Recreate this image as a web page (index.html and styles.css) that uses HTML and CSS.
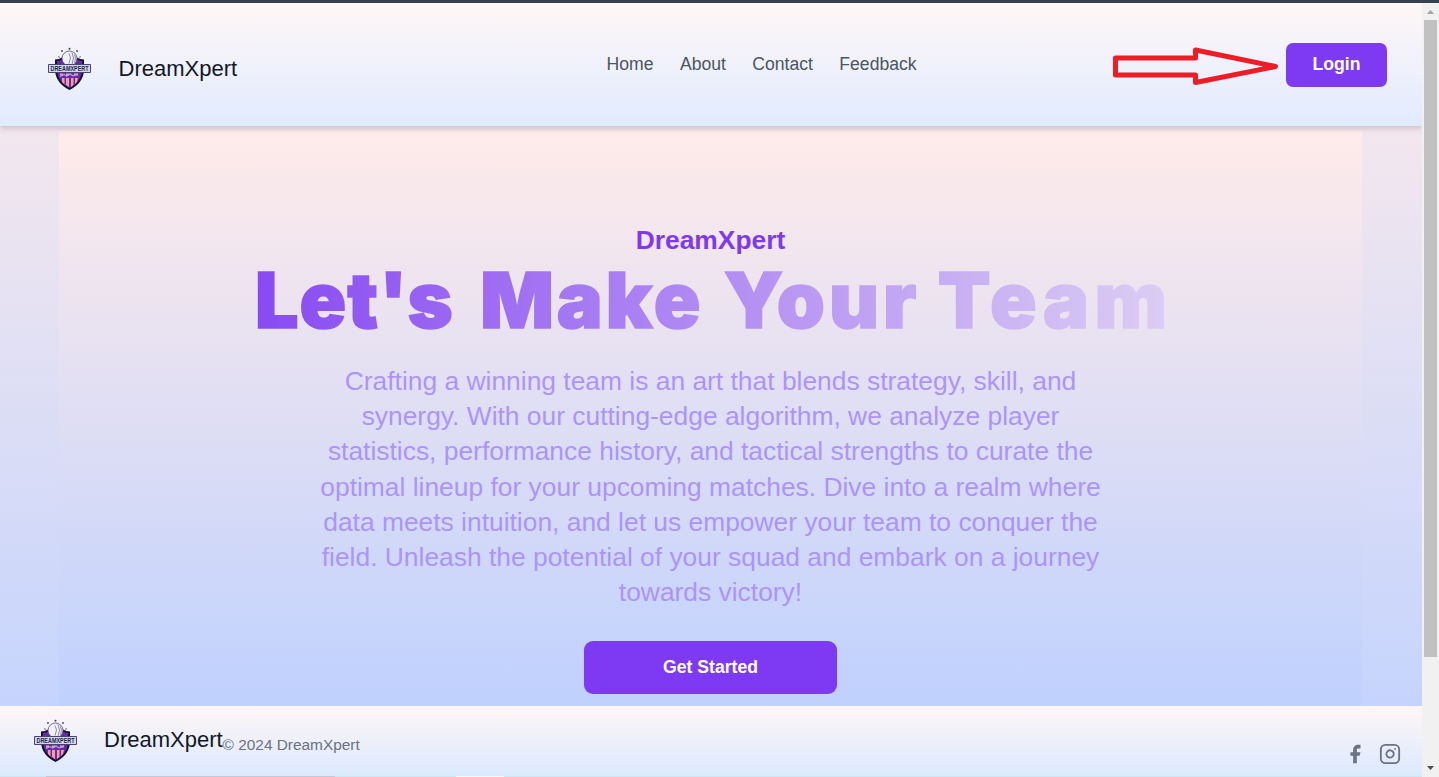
FILE: index.html
```
<!DOCTYPE html>
<html lang="en">
<head>
<meta charset="utf-8">
<title>DreamXpert</title>
<link rel="stylesheet" href="styles.css">
</head>
<body>
<div class="window-edge"></div>
<div class="viewport">
  <div class="page">
    <header class="header">
      <div class="brand">
        <svg class="crest" viewBox="0 0 44 44">
          <g id="shield">
            <g fill="#413b72"><circle cx="21.5" cy="1.7" r="1"/><circle cx="14" cy="4" r=".9"/><circle cx="29" cy="4" r=".9"/><path d="M10 9l2 1-1 1zM33 9l-2 1 1 1z"/></g>
            <path d="M7 12.500q4 0 7-2h15q3 2 7 2v11q-1 13-14.500 19.500Q8 36.500 7 23.500z" fill="#17122f"/>
            <path d="M9 14q4-.5 7-2h11q3 1.500 7 2v10q-1 11-12.500 17Q10 35 9 24z" fill="#652bad"/>
            <path d="M14 31h2.500v6.500L14 35zm4 0h3v9l-3-2zm5 0h2.500v7L23 40zm4 0h3l-1 4-2 2zM12 26.500h3v2h-3zm6 0h3v2h-3zm8 0h4v2h-4z" fill="#f69b9f"/>
            <path d="M12 29.500l4-2 3 1.500 3-2 3 2 5-2" fill="none" stroke="#c1a8e8" stroke-width="1.100"/>
            <circle cx="21.500" cy="11.500" r="7.500" fill="#f0f0f8" stroke="#554e78" stroke-width=".8"/>
            <path d="M21 6.500q3 4 0 10m3-11q3 5 0 12m2.500-10q2 4 0 8" fill="none" stroke="#8e8ba1" stroke-width="1"/>
            <path d="M.5 17.500h42v8H.5z" fill="#d3d5e8" stroke="#474375"/>
          </g>
          <text x="2.500" y="23.700" textLength="38" lengthAdjust="spacingAndGlyphs" class="crest-text">DREAMXPERT</text>
        </svg>
        <span class="brand-name">DreamXpert</span>
      </div>
      <nav class="nav"><a>Home</a><a>About</a><a>Contact</a><a>Feedback</a></nav>
      <button class="login">Login</button>
      <svg class="arrow" viewBox="0 0 168 42"><path d="M3.500 12H83.500V4L163.500 20.500 83.500 36.500V29H3.500z" fill="none" stroke="#ee1c24" stroke-width="5" stroke-linejoin="round"/></svg>
    </header>
    <main class="stage">
      <section class="hero">
        <h2 class="eyebrow">DreamXpert</h2>
        <h1 class="title"><span class="word-one">Let's</span> <span class="word-two">Make</span> <span class="word-three">Your</span> <span class="word-four">Team</span></h1>
        <p class="lead">Crafting a winning team is an art that blends strategy, skill, and synergy. With our cutting-edge algorithm, we analyze player statistics, performance history, and tactical strengths to curate the optimal lineup for your upcoming matches. Dive into a realm where data meets intuition, and let us empower your team to conquer the field. Unleash the potential of your squad and embark on a journey towards victory!</p>
        <button class="start">Get Started</button>
      </section>
    </main>
    <footer class="footer">
      <svg class="crest" viewBox="0 0 44 44"><use href="#shield"/><text x="2.500" y="23.700" textLength="38" lengthAdjust="spacingAndGlyphs" class="crest-text">DREAMXPERT</text></svg>
      <span class="brand-name">DreamXpert</span><span class="copyright">© 2024 DreamXpert</span>
      <div class="social">
        <svg width="22" height="22" viewBox="0 0 24 24" fill="#6b7280"><path d="M18 2h-3a5 5 0 0 0-5 5v3H7v4h3v8h4v-8h3l1-4h-4V7a1 1 0 0 1 1-1h3z"/></svg>
        <svg width="22" height="22" viewBox="0 0 24 24" fill="none" stroke="#6b7280" stroke-width="2" stroke-linecap="round"><rect x="2" y="2" width="20" height="20" rx="5"/><path d="M16 11.370A4 4 0 1 1 12.630 8 4 4 0 0 1 16 11.370zM17.500 6.500h.01"/></svg>
      </div>
    </footer>
    <div class="bottom-edge"></div>
  </div>
  <div class="scrollbar">
    <svg width="17" height="17" viewBox="0 0 17 17"><path d="M5 11l3.500-4 3.500 4z" fill="#a3a3a3"/></svg>
    <div class="thumb"></div>
    <svg width="17" height="17" viewBox="0 0 17 17"><path d="M5 6h7l-3.500 4z" fill="#505050"/></svg>
  </div>
</div>
</body>
</html>
```
FILE: styles.css
```
* { box-sizing: border-box; }
body { margin: 0; height: 777px; overflow: hidden; font-family: "Liberation Sans", Arial, sans-serif; }
.crest-text { font: bold 6.500px "Liberation Sans", sans-serif; fill: #28244f; }
.window-edge { height: 3px; background: #36404e; }
.viewport { display: flex; height: 774px; }
.page { width: 1422px; display: flex; flex-direction: column; overflow: hidden; }
.header { position: relative; z-index: 1; flex: none; height: 123px; display: grid; grid-template-columns: 558.600px 1fr 101px; align-items: start; padding: 40px 35px 0 48px; background: linear-gradient(#fff7f7, #e1ebff); box-shadow: 0 2px 6px rgba(70, 35, 60, .25); }
.brand { display: flex; align-items: flex-start; gap: 26.500px; height: 50px; padding-top: 4px; }
.header .brand-name { padding-top: 6px; }
.crest { width: 44px; height: 44px; flex: none; overflow: visible; }
.brand-name { font-size: 22px; line-height: 31px; color: #111827; }
.nav { display: flex; gap: 26.4px; font-size: 17.6px; line-height: 26px; padding-top: 8px; color: #4b5563; }
.login, .start { border: 0; background: #7e3af2; color: #fff; font: bold 17.6px/26px "Liberation Sans", Arial, sans-serif; }
.login { height: 44px; border-radius: 7px; padding: 0 0 2px; }
.arrow { position: absolute; left: 1112px; top: 42.500px; width: 168px; height: 42px; }
.stage { flex: none; height: 580px; padding: 5px 60px 0 59px; background: linear-gradient(#f3e7ee, #c5d4fd); }
.hero { height: 575px; padding-top: 92px; display: flex; flex-direction: column; align-items: center; background: linear-gradient(#ffebea, #bfd1fe); }
.eyebrow { margin: 0 0 2px; font-size: 26.4px; line-height: 35px; color: #7e3af2; }
.title { margin: 0; width: 1000px; padding: 1px 0 0 44.500px; white-space: nowrap; font: 900 77px/79px Inter, "Liberation Sans", sans-serif; word-spacing: 7px; -webkit-text-stroke: 1.600px transparent; background: linear-gradient(90deg, #8444f2, #dfd3f3); background-clip: text; -webkit-background-clip: text; color: transparent; }
.word-one { letter-spacing: 1px; margin-right: 4px; }
.word-two { letter-spacing: 3px; margin-right: -2px; }
.word-three { letter-spacing: 4px; margin-right: -5px; }
.word-four { letter-spacing: 5.500px; }
.lead { margin: 24px 0 0; width: 792px; text-align: center; font-size: 26.4px; line-height: 35.200px; color: #ac94fa; }
.start { margin-top: 31px; width: 253px; height: 53px; flex: none; border-radius: 9px; padding: 0 0 2px; }
.footer { flex: none; height: 70px; display: flex; align-items: flex-start; padding: 13px 21px 0 34px; background: linear-gradient(#fff6f6, #dce9fe); }
.footer .crest { margin-right: 26px; }
.footer .brand-name { padding-top: 5px; }
.copyright { font-size: 15.400px; line-height: 22px; padding-top: 15px; color: #6b7280; }
.social { margin: 24px 0 0 auto; display: flex; gap: 13px; }
.bottom-edge { height: 1px; flex: none; background: linear-gradient(90deg, #cce9f1 46px, #c7c9d1 46px 335px, #cce9f1 335px 456px, #f2faff 456px 504px, #cce9f1 504px); }
.scrollbar { width: 17px; background: #f1f1f1; display: flex; flex-direction: column; align-items: center; }
.scrollbar svg { flex: none; }
.thumb { width: 13px; height: 637px; background: #c1c1c1; margin-bottom: auto; }
```
